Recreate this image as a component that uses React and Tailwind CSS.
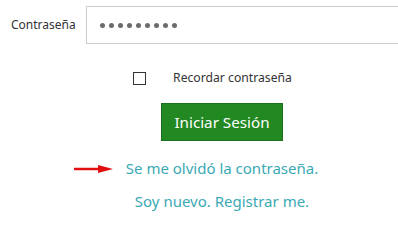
import React, { useState } from 'react';

function Arrow() {
    return (
        <svg className="absolute left-[-52px] top-1/2 -translate-y-1/2" width="40" height="10" viewBox="0 0 40 10">
            <line x1="0" y1="5" x2="26" y2="5" stroke="#e01010" strokeWidth="2.5" />
            <polygon points="24,1 39,5 24,9" fill="#e01010" />
        </svg>
    );
}

export default function App() {
    const [remember, setRemember] = useState(false);

    return (
        <div className="w-[398px] h-[245px] bg-white overflow-hidden font-['Noto_Sans',sans-serif]">
            <div className="flex items-center pt-[6px]">
                <label className="w-[86px] pl-[11px] text-[12px] text-[#333]">Contraseña</label>
                <div className="flex-1 h-[38px] border border-[#ccc] border-r-0 flex items-center pl-[13px] gap-[4px]">
                    {Array.from({ length: 9 }).map((_, i) => (
                        <span key={i} className="w-[5px] h-[5px] rounded-full bg-[#6b6b6b]" />
                    ))}
                </div>
            </div>

            <div className="pl-[46px] flex flex-col items-center">
                <label className="mt-[25px] flex items-center text-[12.2px] text-[#333] -ml-[19px]">
                    <span
                        onClick={() => setRemember(!remember)}
                        className="w-[13px] h-[13px] border border-[#333] bg-white"
                    />
                    <span className="ml-[27px]">Recordar contraseña</span>
                </label>

                <button className="mt-[16px] w-[122px] h-[38px] bg-[#228822] border border-[#1c6f1c] text-white text-[15.2px]">
                    Iniciar Sesión
                </button>

                <a className="relative mt-[16px] text-[15px] text-[#3aa9b4]">
                    <Arrow />
                    Se me olvidó la contraseña.
                </a>
                <a className="mt-[10px] text-[15px] text-[#3aa9b4]">Soy nuevo. Registrar me.</a>
            </div>
        </div>
    );
}
